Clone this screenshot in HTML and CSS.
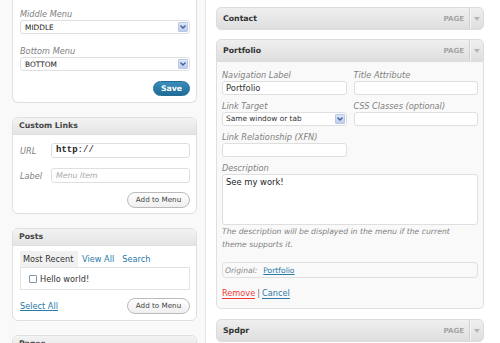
FILE: index.html
```html
<!DOCTYPE html>
<html>
<head>
<meta charset="utf-8">
<link rel="stylesheet" href="styles.css">
</head>
<body>
<div class="page">
  <div class="side">
    <div class="box box-cut">
      <div class="inside">
        <div class="lbl">Middle Menu</div>
        <div class="select"><span>MIDDLE</span><span class="arr"><svg width="6" height="4" viewBox="0 0 6 4"><path d="M0.5 0.5 L3 3 L5.5 0.5" fill="none" stroke="#3d5f96" stroke-width="1.3"/></svg></span></div>
        <div class="lbl lbl2">Bottom Menu</div>
        <div class="select"><span>BOTTOM</span><span class="arr"><svg width="6" height="4" viewBox="0 0 6 4"><path d="M0.5 0.5 L3 3 L5.5 0.5" fill="none" stroke="#3d5f96" stroke-width="1.3"/></svg></span></div>
        <div class="actions"><span class="btn-primary">Save</span></div>
      </div>
    </div>

    <div class="box">
      <h3 class="box-h">Custom Links</h3>
      <div class="inside">
        <div class="row"><span class="rlbl">URL</span><div class="inp mono"><b>http</b>://</div></div>
        <div class="row row2"><span class="rlbl">Label</span><div class="inp ph">Menu Item</div></div>
        <div class="actions act2"><span class="btn">Add to Menu</span></div>
      </div>
    </div>

    <div class="box">
      <h3 class="box-h">Posts</h3>
      <div class="inside">
        <div class="tabs"><span class="tab active">Most Recent</span><a class="tab">View All</a><a class="tab">Search</a></div>
        <div class="panel"><span class="cb"></span><span>Hello world!</span></div>
        <div class="actions split"><a class="link">Select All</a><span class="btn">Add to Menu</span></div>
      </div>
    </div>

    <div class="box">
      <h3 class="box-h">Pages</h3>
      <div class="inside pad-only"></div>
    </div>
  </div>

  <div class="main">
    <div class="item">
      <div class="bar closed"><span class="title">Contact</span><span class="type">PAGE</span><span class="toggle"><svg width="6" height="4" viewBox="0 0 6 4"><path d="M0 0 L6 0 L3 4 Z" fill="#b4b4b4"/></svg></span></div>
    </div>

    <div class="item">
      <div class="bar open"><span class="title">Portfolio</span><span class="type">PAGE</span><span class="toggle"><svg width="6" height="4" viewBox="0 0 6 4"><path d="M0 0 L6 0 L3 4 Z" fill="#b4b4b4"/></svg></span></div>
      <div class="settings">
        <div class="grid">
          <div class="field">
            <div class="flbl">Navigation Label</div>
            <div class="finp">Portfolio</div>
          </div>
          <div class="field">
            <div class="flbl">Title Attribute</div>
            <div class="finp"></div>
          </div>
          <div class="field">
            <div class="flbl">Link Target</div>
            <div class="finp fsel"><span>Same window or tab</span><span class="arr"><svg width="6" height="4" viewBox="0 0 6 4"><path d="M0.5 0.5 L3 3 L5.5 0.5" fill="none" stroke="#3d5f96" stroke-width="1.3"/></svg></span></div>
          </div>
          <div class="field">
            <div class="flbl">CSS Classes (optional)</div>
            <div class="finp"></div>
          </div>
          <div class="field">
            <div class="flbl">Link Relationship (XFN)</div>
            <div class="finp"></div>
          </div>
          <div class="field"></div>
        </div>
        <div class="flbl">Description</div>
        <div class="textarea">See my work!</div>
        <p class="help">The description will be displayed in the menu if the current theme supports it.</p>
        <div class="original"><em>Original:</em><a class="link">Portfolio</a></div>
        <div class="item-actions"><a class="remove">Remove</a><span class="sep">|</span><a class="cancel">Cancel</a></div>
      </div>
    </div>

    <div class="item">
      <div class="bar closed"><span class="title">Spdpr</span><span class="type">PAGE</span><span class="toggle"><svg width="6" height="4" viewBox="0 0 6 4"><path d="M0 0 L6 0 L3 4 Z" fill="#b4b4b4"/></svg></span></div>
    </div>
  </div>
</div>
</body>
</html>
```

FILE: styles.css
```css
* { box-sizing: border-box; }
html, body { margin: 0; padding: 0; }
body {
  width: 500px;
  height: 343px;
  overflow: hidden;
  font-family: "DejaVu Sans", Verdana, sans-serif;
  font-size: 8.2px;
  color: #333;
  background: #fff;
}
.page { display: flex; height: 343px; }

/* ---------- side column ---------- */
.side {
  width: 206px;
  padding: 0 8px 0 12px;
  background: #f9f9f9;
  border-right: 1px solid #e6e6e6;
  flex: none;
}
.box {
  background: #fff;
  border: 1px solid #dfdfdf;
  border-radius: 6px;
  margin-bottom: 14px;
  width: 185px;
}
.box-cut { border-top: none; border-radius: 0 0 6px 6px; }
.box-h {
  margin: 0;
  height: 17px;
  line-height: 16px;
  padding: 0 0 0 6px;
  font-size: 7.8px;
  font-weight: bold;
  color: #464646;
  background: linear-gradient(#f3f3f3, #e4e4e4);
  border-bottom: 1px solid #dfdfdf;
  border-radius: 6px 6px 0 0;
}
.inside { padding: 0 6px 6px 7px; }
.box-cut .inside { padding-top: 9px; }
.lbl {
  font-style: italic;
  color: #808080;
  font-size: 8.2px;
  height: 11px;
  line-height: 11px;
}
.lbl2 { margin-top: 12px; }
.select {
  display: flex;
  align-items: center;
  justify-content: space-between;
  height: 14px;
  border: 1px solid #dfdfdf;
  border-radius: 3px;
  background: #fff;
  padding: 0 1px 0 4px;
  font-size: 7.4px;
  color: #222;
}
.arr {
  width: 10px;
  height: 10px;
  display: flex;
  align-items: center;
  justify-content: center;
  background: linear-gradient(#dde7f8, #bccdee);
  border: 1px solid #b9c8e4;
  border-radius: 1px;
}
.actions { display: flex; justify-content: flex-end; margin-top: 10px; }
.btn-primary {
  height: 15px;
  width: 37px;
  line-height: 13px;
  text-align: center;
  border-radius: 8px;
  background: linear-gradient(#3a8dbb, #1f6c97);
  border: 1px solid #236d95;
  color: #fff;
  font-weight: bold;
  font-size: 7.8px;
}
.btn {
  height: 16px;
  width: 63px;
  line-height: 14px;
  text-align: center;
  border-radius: 8px;
  background: linear-gradient(#fff, #efefef);
  border: 1px solid #bbb;
  color: #464646;
  font-size: 7.2px;
}

.inside:has(.row) { padding-top: 8px; padding-bottom: 5px; }
.row { display: flex; align-items: center; }
.row2 { margin-top: 10px; }
.rlbl {
  width: 31px;
  font-style: italic;
  color: #808080;
  font-size: 8.2px;
}
.inp {
  flex: 1;
  height: 15px;
  border: 1px solid #dfdfdf;
  border-radius: 3px;
  padding: 0 4px;
  line-height: 13px;
  background: #fff;
}
.mono { font-family: "Liberation Mono", "Courier New", monospace; font-size: 9px; color: #222; }
.mono b { font-weight: bold; }
.ph { font-style: italic; color: #aaa; font-size: 7.8px; }
.act2 { margin-top: 9px; }

.tabs { display: flex; margin-top: 5px; height: 16px; }
.tab {
  padding: 0 4px;
  line-height: 16px;
  color: #2a7aa6;
}
.tab.active {
  color: #333;
  background: #f1f1f1;
  width: 58px;
  padding: 0 0 0 3px;
}
.panel {
  height: 23px;
  border: 1px solid #e3e3e3;
  display: flex;
  align-items: center;
  padding-left: 8px;
  gap: 3px;
}
.cb {
  width: 8px;
  height: 8px;
  border: 1px solid #7f93ad;
  background: #fff;
  border-radius: 1px;
}
.split { justify-content: space-between; align-items: center; margin-top: 8px; }
.link { color: #2a7aa6; text-decoration: underline; }
.pad-only { height: 20px; }

/* ---------- main column ---------- */
.main { flex: 1; padding: 7px 0 0 10px; background: #fff; }
.item { width: 268px; margin-bottom: 9px; }
.bar {
  display: flex;
  align-items: center;
  height: 23px;
  border: 1px solid #dcdcdc;
  background: linear-gradient(#efefef, #dedede);
  padding-left: 6px;
}
.bar.closed { border-radius: 5px; }
.bar.open { border-radius: 5px 5px 0 0; }
.title { flex: 1; font-weight: bold; font-size: 7.8px; color: #333; }
.type { font-weight: bold; font-size: 7px; color: #a4a4a4; margin-right: 5px; }
.toggle {
  width: 14px;
  height: 100%;
  border-left: 1px solid #d2d2d2;
  box-shadow: inset 1px 0 0 #f4f4f4;
  display: flex;
  align-items: center;
  justify-content: center;
}
.settings {
  background: #f9f9f9;
  border: 1px solid #dfdfdf;
  border-top: none;
  border-radius: 0 0 5px 5px;
  padding: 7px 5px 9px 5px;
  margin-bottom: 10px;
}
.grid { display: grid; grid-template-columns: 1fr 1fr; column-gap: 7px; }
.field { margin-bottom: 5px; }
.flbl {
  font-style: italic;
  color: #808080;
  font-size: 8.2px;
  height: 12px;
  line-height: 12px;
}
.finp {
  height: 14px;
  border: 1px solid #dfdfdf;
  border-radius: 3px;
  background: #fff;
  padding: 0 3px;
  line-height: 12px;
  font-size: 8.4px;
  color: #333;
}
.fsel {
  display: flex;
  align-items: center;
  justify-content: space-between;
  font-size: 7.4px;
  padding: 0 1px 0 3px;
}
.textarea {
  height: 51px;
  border: 1px solid #dfdfdf;
  border-radius: 3px;
  background: #fff;
  padding: 2px 3px;
  font-size: 8.4px;
  color: #222;
}
.help {
  margin: 0;
  padding-right: 16px;
  font-style: italic;
  color: #808080;
  font-size: 7.7px;
  line-height: 13px;
}
.original {
  margin-top: 11px;
  height: 16px;
  border: 1px solid #dfdfdf;
  border-radius: 4px;
  display: flex;
  align-items: center;
  padding-left: 2px;
  gap: 6px;
  font-size: 7.6px;
}
.original em { color: #888; }
.item-actions {
  margin-top: 9px;
  display: flex;
  align-items: center;
  gap: 2px;
  height: 12px;
  font-size: 8.2px;
}
.remove { color: #f03a3a; border-bottom: 1px solid #f03a3a; }
.cancel { color: #2a7aa6; border-bottom: 1px solid #2a7aa6; }
.sep { color: #666; }
```
